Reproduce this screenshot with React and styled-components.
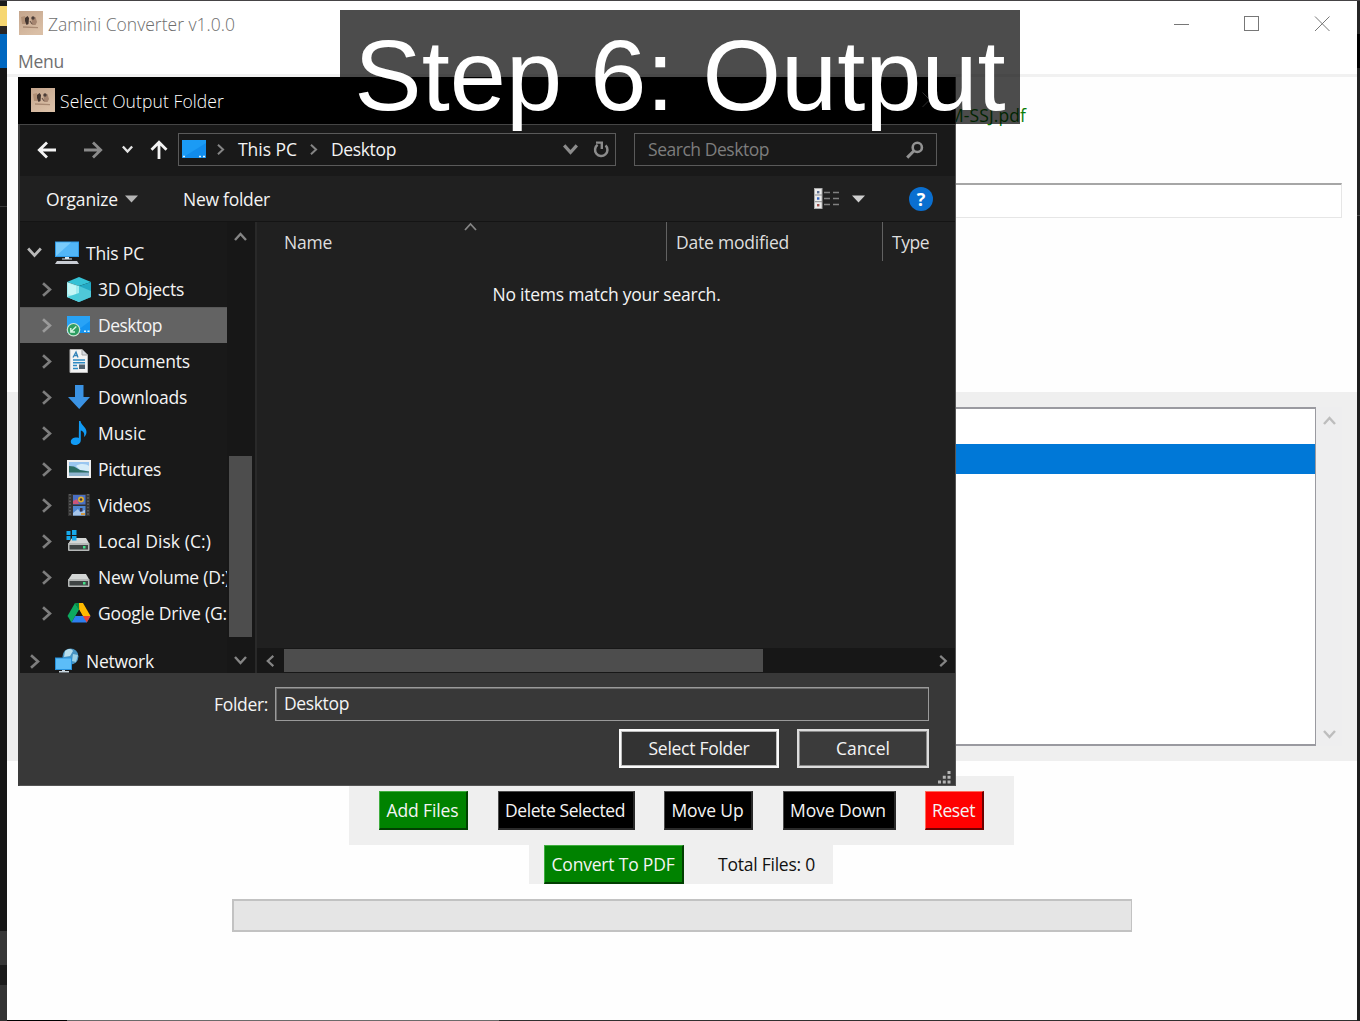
import React, { useLayoutEffect, useRef } from "react";
import styled, { createGlobalStyle, css } from "styled-components";

const Global = createGlobalStyle`
  * { box-sizing: border-box; }
  body { margin: 0; background: #1a1a1a; overflow: hidden; }
  svg { display: block; flex: none; }
`;

/* ---------- text ---------- */
const TextBox = styled.span`
  display: block;
  flex: none;
  width: ${(p) => p.$w}px;
  white-space: nowrap;
  font-family: "Open Sans", "Noto Sans", sans-serif;
  font-size: ${(p) => p.$size || 17.5}px;
  font-weight: ${(p) => p.$weight || 400};
  line-height: 24px;
  color: ${(p) => p.$color || "#f4f4f4"};
`;

// Spreads the letters so that the label fills its column exactly.
function Label({ w, size, weight, color, children }) {
  const ref = useRef(null);
  useLayoutEffect(() => {
    const el = ref.current;
    const fit = () => {
      el.style.letterSpacing = "0px";
      const natural = el.getBoundingClientRect().width;
      el.style.letterSpacing = `${(w - natural) / el.textContent.length}px`;
    };
    fit();
    document.fonts?.ready.then(fit);
  }, [w]);
  return (
    <TextBox $w={w} $size={size} $weight={weight} $color={color}>
      <span ref={ref}>{children}</span>
    </TextBox>
  );
}

/* ---------- desktop ---------- */
const Desktop = styled.div`
  position: relative;
  width: 1360px;
  height: 1021px;
  overflow: hidden;
  background: #1b1b1b;
  border-top: 1px solid #454345;
`;
const LeftStrip = styled.div`
  width: 7px;
  height: 1020px;
  display: flex;
  flex-direction: column;
`;
const Band = styled.div`
  height: ${(p) => p.$h}px;
  background: ${(p) => p.$c};
`;
const RightStrip = styled(LeftStrip)`
  position: absolute;
  top: 0;
  right: 0;
  width: 3px;
`;
const BottomEdge = styled.div`
  position: absolute;
  left: 7px;
  bottom: 0;
  width: 1350px;
  height: 1px;
  background: linear-gradient(to right, #000 60px, #6a6a6a 60px, #6a6a6a 492px, #303030 492px);
`;

/* ---------- converter window ---------- */
const Win = styled.div`
  position: absolute;
  left: 7px;
  top: 0;
  width: 1350px;
  height: 1019px;
  background: #fefefe;
  display: flex;
  flex-direction: column;
`;
const WinTitle = styled.div`
  height: 47px;
  flex: none;
  display: flex;
  align-items: center;
  padding: 0 27px 3px 12px;
  gap: 5px;
  background: #fff;
`;
const TitleText = styled.div`
  padding-top: 1px;
`;
const WinControls = styled.div`
  margin-left: auto;
  padding-top: 1px;
  display: flex;
  gap: 54px;
`;
const MenuBar = styled.div`
  height: 26px;
  flex: none;
  padding: 1px 11px;
  background: #fff;
`;
const Rule = styled.div`
  height: 3px;
  flex: none;
  background: #f1f1f1;
`;
const PathArea = styled.div`
  height: 315px;
  flex: none;
  padding: 26px 15px 0 0;
  display: flex;
  flex-direction: column;
  align-items: flex-end;
`;
const PathLine = styled.div`
  height: 80px;
  padding-right: 316px;
`;
const Entry = styled.div`
  width: 1320px;
  height: 35px;
  border: 1px solid #e6e6e6;
  border-top: 2px solid #a6a6a6;
  background: #fff;
`;
const ListFrame = styled.div`
  height: 369px;
  flex: none;
  padding: 15px 15px 15px;
  display: flex;
  background: #efefef;
`;
const ListBox = styled.div`
  flex: 1;
  border: 2px solid #9a9aa0;
  border-right-width: 1px;
  padding-top: 35px;
  background: #fff;
`;
const ListSelected = styled.div`
  height: 30px;
  background: #0078d7;
`;
const ListScroll = styled.div`
  width: 26px;
  display: flex;
  flex-direction: column;
  justify-content: space-between;
  align-items: center;
  padding: 9px 0 5px;
  background: #eeeeef;
`;
const ButtonPanel = styled.div`
  width: ${(p) => p.$w}px;
  height: ${(p) => p.$h}px;
  margin-left: ${(p) => p.$ml}px;
  margin-top: ${(p) => p.$mt || 0}px;
  padding: ${(p) => p.$pad};
  flex: none;
  display: flex;
  align-items: flex-start;
  gap: ${(p) => p.$gap}px;
  background: #efefef;
`;
const tones = {
  green: ["#008200", "#3fae3f", "#013f01"],
  black: ["#000", "#4c4c4c", "#2a2a2a"],
  red: ["#fe0000", "#ff6a5a", "#6e0000"],
};
const TkButton = styled.button`
  width: ${(p) => p.$w}px;
  height: 39px;
  padding: 0 1px 1px 0;
  flex: none;
  display: flex;
  align-items: center;
  justify-content: center;
  background: ${(p) => tones[p.$tone][0]};
  border: 2px solid;
  border-color: ${(p) => `${tones[p.$tone][1]} ${tones[p.$tone][2]} ${tones[p.$tone][2]} ${tones[p.$tone][1]}`};
  border-left-width: 1px;
  border-top-width: 1px;
`;
const TotalWrap = styled.div`
  padding-top: 7px;
`;
const Progress = styled.div`
  width: 900px;
  height: 33px;
  margin: 15px 0 0 225px;
  flex: none;
  border: 2px solid #c2c2c2;
  border-right-width: 1px;
  background: #e5e5e5;
`;

/* ---------- folder dialog ---------- */
const Dialog = styled.div`
  position: absolute;
  left: 18px;
  top: 76px;
  width: 938px;
  height: 709px;
  display: flex;
  flex-direction: column;
  border: 1px solid #555;
  border-top: 0;
  border-left: 2px solid #3c3c3c;
  background: #191919;
`;
const DlgTitle = styled.div`
  height: 48px;
  flex: none;
  display: flex;
  align-items: center;
  gap: 5px;
  padding: 0 17px 1px 13px;
  margin-left: -2px;
  background: #000;
  border-bottom: 1px solid #454545;
`;
const DlgTitleText = styled.div`
  padding-top: 2px;
`;
const Push = styled.div`
  margin-left: auto;
`;
const NavBar = styled.div`
  height: 51px;
  flex: none;
  display: flex;
  align-items: center;
  padding: 0 18px 2px 17px;
`;
const NavIcons = styled.div`
  display: flex;
  align-items: center;
  width: 141px;
`;
const Address = styled.div`
  width: 438px;
  height: 33px;
  display: flex;
  align-items: center;
  border: 1px solid #5a5a5a;
  padding: 0 5px 2px 3px;
`;
const Gap = styled.div`
  width: ${(p) => p.$w}px;
  flex: none;
`;
const Search = styled.div`
  width: 303px;
  height: 33px;
  margin-left: 18px;
  display: flex;
  align-items: center;
  justify-content: space-between;
  border: 1px solid #5a5a5a;
  padding: 0 12px 2px 13px;
`;
const Lowered = styled.div`
  padding-top: 2px;
`;
const Tools = styled.div`
  height: 46px;
  flex: none;
  display: flex;
  align-items: center;
  padding: 0 22px 0 26px;
  background: #202020;
  border-bottom: 1px solid #141414;
`;
const Body = styled.div`
  height: 451px;
  flex: none;
  display: flex;
`;
const Side = styled.div`
  width: 235px;
  display: flex;
  background: #191919;
`;
const Tree = styled.div`
  width: 207px;
  padding-top: 13px;
  overflow: hidden;
  font-size: 0;
`;
const TreeRow = styled.div`
  width: 207px;
  height: 36px;
  display: flex;
  align-items: center;
  overflow: hidden;
  padding: 0 0 1px ${(p) => (p.$root ? 7 : 19)}px;
  margin-top: ${(p) => p.$mt || 0}px;
  ${(p) =>
    p.$active &&
    css`
      background: #636363;
      box-shadow: inset 0 1px #585858;
    `}
`;
const IconSlot = styled.div`
  margin: ${(p) => (p.$root ? "1px 7px 0 13px" : "1px 6px 0 12px")};
`;
const SideScroll = styled.div`
  width: 28px;
  display: flex;
  flex-direction: column;
  align-items: center;
  padding: 10px 3px 5px 2px;
  background: #171717;
`;
const SideThumb = styled.div`
  width: 23px;
  height: 181px;
  margin: 211px 0 17px;
  background: #4d4d4d;
`;
const Files = styled.div`
  flex: 1;
  display: flex;
  flex-direction: column;
  border-left: 2px solid #292929;
  background: #202020;
`;
const Header = styled.div`
  height: 39px;
  display: flex;
`;
const Column = styled.div`
  width: ${(p) => p.$w}px;
  display: flex;
  padding: 8px 0 0 ${(p) => p.$pl}px;
  border-right: ${(p) => (p.$last ? 0 : 1)}px solid #626262;
`;
const SortMark = styled.div`
  margin: -8px 0 0 132px;
`;
const Empty = styled.div`
  flex: 1;
  display: flex;
  justify-content: center;
  padding: 21px 0 0 1px;
`;
const HScroll = styled.div`
  height: 25px;
  display: flex;
  align-items: center;
  padding: 0 6px 0 8px;
  background: #171717;
`;
const HThumb = styled.div`
  width: 479px;
  height: 23px;
  margin-left: 7px;
  background: #4d4d4d;
`;
const Footer = styled.div`
  flex: 1;
  display: flex;
  flex-direction: column;
  align-items: flex-end;
  background: #383838;
  padding-top: 14px;
`;
const FolderRow = styled.div`
  display: flex;
  align-items: center;
  gap: 7px;
  padding-right: 26px;
`;
const FolderInput = styled.div`
  width: 654px;
  height: 34px;
  padding: 3px 8px;
  border: 1px solid #9a9a9a;
  box-shadow: inset 1px 1px #6a6a6a;
`;
const Actions = styled.div`
  display: flex;
  gap: 18px;
  padding: 8px 26px 0 0;
`;
const DlgButton = styled.button`
  width: ${(p) => p.$w}px;
  height: 39px;
  padding: 0 0 1px;
  display: flex;
  align-items: center;
  justify-content: center;
  background: ${(p) => (p.$primary ? "#333" : "#3b3b3b")};
  border: ${(p) => (p.$primary ? "2px solid #fafafa" : "2px solid #dcdcdc")};
  box-shadow: inset 0 0 0 1px ${(p) => (p.$primary ? "#bdbdbd" : "#8a8a8a")};
`;
const Grip = styled.div`
  padding: 3px 4px 0 0;
`;

/* ---------- caption ---------- */
const Caption = styled.div`
  position: absolute;
  left: 340px;
  top: 9px;
  width: 680px;
  height: 114px;
  display: flex;
  justify-content: center;
  background: rgba(0, 0, 0, 0.7);
  color: #fff;
  font: 101px/130px "Liberation Sans", Arial, sans-serif;
  white-space: nowrap;
`;

/* ---------- icons ---------- */
const paths = {
  up: "M1 8 L6.5 2 L12 8",
  down: "M1 3 L6.5 9 L12 3",
  left: "M9 1 L3 6.5 L9 12",
  right: "M3.5 1 L9.5 6.5 L3.5 12",
};
const Chevron = ({ dir, color = "#858585", width = 2.4, size = 13 }) => (
  <svg width={size} height={size} viewBox="0 0 13 13" fill="none">
    <path d={paths[dir]} stroke={color} strokeWidth={width} />
  </svg>
);
const AppIcon = () => (
  <svg width="24" height="24" viewBox="0 0 24 24">
    <defs>
      <linearGradient id="photo" x1="0" y1="0" x2="0.6" y2="1">
        <stop offset="0" stopColor="#c4a58c" />
        <stop offset="1" stopColor="#dabfa6" />
      </linearGradient>
      <filter id="soft"><feGaussianBlur stdDeviation="0.6" /></filter>
    </defs>
    <rect width="24" height="24" fill="url(#photo)" />
    <g filter="url(#soft)">
      <path d="M2 6 L6 5 L7 13 L3 13Z" fill="#b08f75" />
      <path d="M6 7 L8.5 5 L10 7 L9.5 13 L7.5 14 L6 10Z" fill="#43342f" />
      <path d="M12.5 7 L16.5 6 L18 11 L16.5 14 L13 14Z" fill="#a58570" />
      <circle cx="14" cy="7" r="1.7" fill="#4b3c38" />
      <path d="M11 10 L13 13" stroke="#6d564a" strokeWidth="1.2" />
      <path d="M4 16 L19 16.6" stroke="#a98a73" strokeWidth="1.4" />
    </g>
  </svg>
);
const Screen = () => (
  <svg width="24" height="18" viewBox="0 0 24 18">
    <rect width="24" height="18" fill="#1b9bf5" />
    <path d="M0 18 L24 3 V18Z" fill="#118cec" />
    <path d="M1 16.5h2M17 16.5h2M21 16.5h2" stroke="#d8f2ff" strokeWidth="1.5" />
  </svg>
);
const Monitor = () => (
  <svg width="24" height="24" viewBox="0 0 24 24">
    <rect y="0.5" width="24" height="15.5" fill="#2e9be8" />
    <rect x="1" y="1.5" width="22" height="13.5" fill="#52b6f7" />
    <path d="M1 15 L16 1.5 H1Z" fill="#79cbfb" />
    <path d="M10 16h4v1.5h3v1H7v-1h3z" fill="#d8e4ec" />
    <path d="M2 20 H22 L24 23 H0Z" fill="#c9cdd4" />
  </svg>
);
const Cube = () => (
  <svg width="26" height="25" viewBox="0 0 26 25">
    <path d="M1 5 L13 0 L25 5 L13 9Z" fill="#36c2d6" />
    <path d="M1 5 L13 9 V25 L1 20Z" fill="#a2edf1" />
    <path d="M2 6 L10 9 V20 L2 17Z" fill="#c4f6f6" />
    <path d="M25 5 L13 9 V25 L25 20Z" fill="#23a9c4" />
    <path d="M13 9 L25 14 V20 L13 25Z" fill="#4fc8d9" />
    <path d="M1 20 L13 16 V25Z" fill="#48cbd9" />
  </svg>
);
const DesktopSync = () => (
  <svg width="26" height="24" viewBox="0 0 26 24">
    <rect x="1" y="3" width="23" height="17" fill="#1594f0" />
    <path d="M1 3 H24 V8 L8 20 H1Z" fill="#29a3f6" />
    <path d="M18 18.3h2M21.5 18.3h2" stroke="#d8f2ff" strokeWidth="1.4" />
    <circle cx="7.5" cy="16.7" r="6.8" fill="#cfe6d6" />
    <circle cx="7.5" cy="16.7" r="5.6" fill="#2f9e62" />
    <path d="M4.8 15 V19 H9 M5 18.7 L10.3 13.4" fill="none" stroke="#d6f5e3" strokeWidth="1.4" />
  </svg>
);
const Doc = () => (
  <svg width="26" height="24" viewBox="0 0 26 24">
    <path d="M4 0.5 H16 L21.5 6 V23.5 H4Z" fill="#f3f3f3" stroke="#b9b9b9" />
    <path d="M16 0.5 V6 H21.5" fill="#d7dbe0" stroke="#a5a5a5" />
    <path d="M7 8.5 L10 3 L12 8.5 M8 6.5H12" fill="none" stroke="#3383b8" strokeWidth="1.3" />
    <path d="M7 11h12M7 13.7h12M7 19.5h5" stroke="#2e8ac2" strokeWidth="1.5" />
    <path d="M7 16.5h4" stroke="#2e8ac2" strokeWidth="1.5" />
    <rect x="13" y="15.5" width="6" height="4.5" fill="#51616e" />
  </svg>
);
const DownArrow = () => (
  <svg width="26" height="24" viewBox="0 0 26 24">
    <path d="M9 0 H17.5 V12 H24 L13.2 24 L2 12 H9Z" fill="#3b93e4" />
  </svg>
);
const Note = () => (
  <svg width="26" height="24" viewBox="0 0 26 24">
    <path d="M13 0 H14.5 C15 4 20.5 6 20.5 11 C20.5 14 18.5 15.5 18 16 C19 12 17 10 14.8 9.5 V19 C14.8 22.5 12 24 9 24 C6.5 24 4.5 22.8 4.8 20.5 C5 17.5 9 15.8 12.8 17Z" fill="#119bf5" />
  </svg>
);
const Picture = () => (
  <svg width="26" height="24" viewBox="0 0 26 24">
    <rect x="1" y="3" width="24" height="18" fill="#efefef" />
    <rect x="3" y="5" width="20" height="14" fill="#9ac6f0" />
    <path d="M10 9 C14 6 21 7 23 9 V14 L14 13Z" fill="#d5ecf9" />
    <path d="M3 9 L8 9.5 L14 13 L23 14.6 V16 H3Z" fill="#2c6d64" />
    <rect x="3" y="15.5" width="20" height="3.5" fill="#8fb4cf" />
  </svg>
);
const Film = () => (
  <svg width="26" height="24" viewBox="0 0 26 24">
    <rect x="2" y="1" width="22" height="22" fill="#333" />
    <path d="M4 1 V23 M22 1 V23" stroke="#707070" strokeWidth="1.3" strokeDasharray="1.5 1.7" />
    <rect x="7" y="2" width="12.5" height="9.5" fill="#496fc4" />
    <rect x="7" y="13" width="12.5" height="9.5" fill="#4f86d0" />
    <path d="M7 8 L11 6 L13 11 H7Z" fill="#cb557a" />
    <circle cx="15" cy="6.5" r="3" fill="#e0ae2c" />
    <circle cx="15" cy="6.5" r="1.3" fill="#37313e" />
    <path d="M7 20 L12 16 L14 19 L19 17 V22.5 H7Z" fill="#a5c5ea" />
    <rect x="14" y="15" width="2.5" height="3.5" fill="#38334e" />
    <rect x="15" y="20" width="4" height="2" fill="#d49a42" />
  </svg>
);
const Drive = ({ win }) => (
  <svg width="26" height="24" viewBox="0 0 26 24">
    <path d="M6 9 H20 L23.5 15 H2Z" fill="#d3d6d5" />
    <rect x="2" y="14" width="21.5" height="8" rx="1" fill="#b5b8b7" />
    <rect x="3.5" y="16" width="18.5" height="4.5" fill="#3f4444" />
    <rect x="17" y="17" width="2.5" height="2.5" fill="#42e087" />
    {win && (
      <path d="M0.5 2h4v4h-4zM6 1h4.5v5H6zM0.5 7h4v4h-4zM6 7h4.5v4.5H6z" fill="#17a9ea" />
    )}
  </svg>
);
const GDrive = () => (
  <svg width="26" height="24" viewBox="0 0 26 24">
    <path d="M9 2 L1.5 15 L5.5 21.5 L13.2 8.5Z" fill="#0da960" />
    <path d="M9 2 H17 L13.2 8.5Z" fill="#088a45" />
    <path d="M17 2 L24.5 15 H16.8 L13.2 8.5 L11 2Z" fill="#ffba00" />
    <path d="M9 2 H13 L13.2 8.5Z" fill="#088a45" />
    <path d="M9.3 15 H24.5 L20.8 21.5 H5.5Z" fill="#2d7ff0" />
    <path d="M16.8 15 H24.5 L20.8 21.5Z" fill="#ea4335" />
    <path d="M13.1 9 L16.6 15 H9.6Z" fill="#191919" />
  </svg>
);
const NetworkIcon = () => (
  <svg width="24" height="26" viewBox="0 0 24 26">
    <circle cx="15.5" cy="8.5" r="8" fill="#4793c1" />
    <path d="M10 3 C14 0 17 1 18 3 L15 8 L9 9Z" fill="#b7deed" />
    <path d="M18 6 L23 7 L21 14 L17 13Z" fill="#9cd1e6" />
    <rect y="9.5" width="17" height="12.5" fill="#2691dc" />
    <rect x="1" y="10.5" width="15" height="10.5" fill="#5cbdf8" />
    <path d="M7 22h3v1h4v1.6H4V23h3z" fill="#c8d6df" />
  </svg>
);
const NavArrow = ({ color, flip }) => (
  <svg width="20" height="18" viewBox="0 0 20 18" transform={flip ? "scale(-1,1)" : undefined}>
    <path d="M10 1.5 L2.3 9 L10 16.5 M2.3 9 H19" fill="none" stroke={color} strokeWidth="2.8" />
  </svg>
);
const UpArrow = () => (
  <svg width="18" height="20" viewBox="0 0 18 20">
    <path d="M1.5 9.7 L9 2.2 L16.5 9.7 M9 2.2 V19" fill="none" stroke="#f4f4f4" strokeWidth="2.8" />
  </svg>
);
const Refresh = () => (
  <svg width="18" height="19" viewBox="0 0 18 19">
    <path d="M13.6 5.4 A6.2 6.2 0 1 1 5.6 4.8" fill="none" stroke="#8c8c8c" strokeWidth="2.5" />
    <path d="M4 2.6 H9.8 V9" fill="none" stroke="#8c8c8c" strokeWidth="2.4" />
  </svg>
);
const Magnifier = () => (
  <svg width="18" height="18" viewBox="0 0 18 18">
    <circle cx="11.3" cy="6.4" r="4.6" fill="none" stroke="#929292" strokeWidth="2.6" />
    <path d="M8 9.8 L1.2 16.6" stroke="#929292" strokeWidth="3" />
  </svg>
);
const Caret = ({ color }) => (
  <svg width="13" height="8" viewBox="0 0 13 8"><path d="M0 0.5 H13 L6.5 7.5Z" fill={color} /></svg>
);
const ViewIcon = () => (
  <svg width="26" height="21" viewBox="0 0 26 21">
    <rect x="0.5" y="0.5" width="7.5" height="20" fill="#ececec" stroke="#aaa" />
    <path d="M1 7H8M1 13.7H8" stroke="#8b8b8b" />
    <rect x="3" y="3" width="2.4" height="2.4" fill="#5d6f91" />
    <rect x="3" y="9.3" width="2.4" height="2.4" fill="#3566c0" />
    <rect x="3" y="16" width="2.4" height="2.4" fill="#a0524c" />
    <path d="M10 4.5h6M19 4.5h6M10 10.5h6M19 10.5h6M10 16.5h6M19 16.5h6" stroke="#808080" strokeWidth="1.4" />
  </svg>
);
const HelpDot = styled.div`
  width: 24px;
  height: 24px;
  border-radius: 50%;
  display: flex;
  align-items: center;
  justify-content: center;
  background: #0a6fd0;
  color: #fff;
  font: 700 18px/22px "Open Sans", sans-serif;
`;

const tree = [
  ["3D Objects", 86, <Cube />],
  ["Desktop", 64, <DesktopSync />],
  ["Documents", 92, <Doc />],
  ["Downloads", 89, <DownArrow />],
  ["Music", 48, <Note />],
  ["Pictures", 63, <Picture />],
  ["Videos", 53, <Film />],
  ["Local Disk (C:)", 113, <Drive win />],
  ["New Volume (D:)", 132, <Drive />],
  ["Google Drive (G:)", 134, <GDrive />],
];

const leftBands = [
  [5, "#1b1b1b"], [20, "#f6d671"], [8, "#2a2422"], [34, "#0067c0"], [138, "#161616"], [1, "#3a3a3a"],
  [724, "#161616"], [34, "#373737"], [20, "#1a1a1a"], [36, "#333"],
];
const rightBands = [[33, "#262626"], [34, "#000"], [147, "#222"], [1, "#4a4a4a"], [805, "#1d1d1d"]];

export default function App() {
  return (
    <Desktop>
      <Global />
      <LeftStrip>{leftBands.map(([h, c], i) => <Band key={i} $h={h} $c={c} />)}</LeftStrip>
      <RightStrip>{rightBands.map(([h, c], i) => <Band key={i} $h={h} $c={c} />)}</RightStrip>

      <Win>
        <WinTitle>
          <AppIcon />
          <TitleText><Label w={187} weight={300} color="#6e6e6e">Zamini Converter v1.0.0</Label></TitleText>
          <WinControls>
            <svg width="16" height="16"><path d="M0 8.5H15" stroke="#777" /></svg>
            <svg width="16" height="16"><rect x="0.5" y="0.5" width="14" height="14" fill="none" stroke="#777" /></svg>
            <svg width="16" height="16"><path d="M1 0.5 L15.5 15 M15.5 0.5 L1 15" stroke="#777" /></svg>
          </WinControls>
        </WinTitle>
        <MenuBar><Label w={46} color="#6f6f6f">Menu</Label></MenuBar>
        <Rule />
        <PathArea>
          <PathLine><Label w={78} color="#087c08">M-SSJ.pdf</Label></PathLine>
          <Entry />
        </PathArea>
        <ListFrame>
          <ListBox><ListSelected /></ListBox>
          <ListScroll>
            <Chevron dir="up" color="#bdbdbd" />
            <Chevron dir="down" color="#bdbdbd" />
          </ListScroll>
        </ListFrame>
        <ButtonPanel $w={665} $h={69} $ml={342} $mt={15} $pad="15px 30px" $gap={29.5}>
          <TkButton $tone="green" $w={89}><Label w={72}>Add Files</Label></TkButton>
          <TkButton $tone="black" $w={137}><Label w={120}>Delete Selected</Label></TkButton>
          <TkButton $tone="black" $w={89}><Label w={72}>Move Up</Label></TkButton>
          <TkButton $tone="black" $w={113}><Label w={96}>Move Down</Label></TkButton>
          <TkButton $tone="red" $w={59}><Label w={43}>Reset</Label></TkButton>
        </ButtonPanel>
        <ButtonPanel $w={304} $h={39} $ml={522} $pad="0 15px" $gap={34}>
          <TkButton $tone="green" $w={140}><Label w={123}>Convert To PDF</Label></TkButton>
          <TotalWrap><Label w={97} color="#111">Total Files: 0</Label></TotalWrap>
        </ButtonPanel>
        <Progress />
      </Win>
      <BottomEdge />

      <Dialog>
        <DlgTitle>
          <AppIcon />
          <DlgTitleText><Label w={164} weight={300} color="#fff">Select Output Folder</Label></DlgTitleText>
          <Push>
            <svg width="16" height="16"><path d="M0.5 0.5 L15 15 M15 0.5 L0.5 15" stroke="#999" /></svg>
          </Push>
        </DlgTitle>
        <NavBar>
          <NavIcons>
            <NavArrow color="#f4f4f4" />
            <Gap $w={26} />
            <NavArrow color="#8a8a8a" flip />
            <Gap $w={19} />
            <Chevron dir="down" color="#e4e4e4" size={11} width={2.8} />
            <Gap $w={17} />
            <UpArrow />
          </NavIcons>
          <Address>
            <Screen />
            <Gap $w={9} /><Lowered><Chevron dir="right" size={11} /></Lowered>
            <Gap $w={12} /><Label w={59}>This PC</Label>
            <Gap $w={11} /><Lowered><Chevron dir="right" size={11} /></Lowered>
            <Gap $w={12} /><Label w={65}>Desktop</Label>
            <Push><Lowered><Chevron dir="down" color="#8c8c8c" width={2.8} size={15} /></Lowered></Push>
            <Gap $w={14} /><Lowered><Refresh /></Lowered>
          </Address>
          <Search>
            <Label w={121} color="#7d7d7d">Search Desktop</Label>
            <Lowered><Magnifier /></Lowered>
          </Search>
        </NavBar>
        <Tools>
          <Label w={72}>Organize</Label>
          <Gap $w={7} /><Caret color="#b5b5b5" />
          <Gap $w={45} /><Label w={87}>New folder</Label>
          <Push><ViewIcon /></Push>
          <Gap $w={12} /><Caret color="#cfcfcf" />
          <Gap $w={44} /><HelpDot>?</HelpDot>
        </Tools>
        <Body>
          <Side>
            <Tree>
              <TreeRow $root>
                <Chevron dir="down" color="#b8b8b8" size={15} width={2.4} />
                <IconSlot $root><Monitor /></IconSlot>
                <Label w={58}>This PC</Label>
              </TreeRow>
              {tree.map(([name, w, icon]) => (
                <TreeRow key={name} $active={name === "Desktop"}>
                  <Lowered><Chevron dir="right" size={15} color={name === "Desktop" ? "#9a9a9a" : "#7d7d7d"} width={2.3} /></Lowered>
                  <IconSlot>{icon}</IconSlot>
                  <Label w={w}>{name}</Label>
                </TreeRow>
              ))}
              <TreeRow $root $mt={12}>
                <Lowered><Chevron dir="right" size={15} color="#7d7d7d" width={2.3} /></Lowered>
                <IconSlot $root><NetworkIcon /></IconSlot>
                <Label w={68}>Network</Label>
              </TreeRow>
            </Tree>
            <SideScroll>
              <Chevron dir="up" />
              <SideThumb />
              <Chevron dir="down" />
            </SideScroll>
          </Side>
          <Files>
            <Header>
              <Column $w={410} $pl={27}>
                <Label w={48} color="#dedede">Name</Label>
                <SortMark><Chevron dir="up" width={1.8} /></SortMark>
              </Column>
              <Column $w={216} $pl={9}><Label w={113} color="#dedede">Date modified</Label></Column>
              <Column $w={70} $pl={9} $last><Label w={37} color="#dedede">Type</Label></Column>
            </Header>
            <Empty><Label w={228}>No items match your search.</Label></Empty>
            <HScroll>
              <Chevron dir="left" size={12} />
              <HThumb />
              <Push><Chevron dir="right" size={12} /></Push>
            </HScroll>
          </Files>
        </Body>
        <Footer>
          <FolderRow>
            <Label w={54}>Folder:</Label>
            <FolderInput><Label w={65}>Desktop</Label></FolderInput>
          </FolderRow>
          <Actions>
            <DlgButton $w={160} $primary><Label w={101}>Select Folder</Label></DlgButton>
            <DlgButton $w={132}><Label w={54}>Cancel</Label></DlgButton>
          </Actions>
          <Grip>
            <svg width="13" height="13" viewBox="0 0 13 13">
              <path d="M9.5 0h3v3h-3zM9.5 4.7h3v3h-3zM4.8 4.7h3v3h-3zM9.5 9.4h3v3h-3zM4.8 9.4h3v3h-3zM0 9.4h3v3H0z" fill="#b5b5b5" />
            </svg>
          </Grip>
        </Footer>
      </Dialog>

      <Caption>Step 6: Output</Caption>
    </Desktop>
  );
}
